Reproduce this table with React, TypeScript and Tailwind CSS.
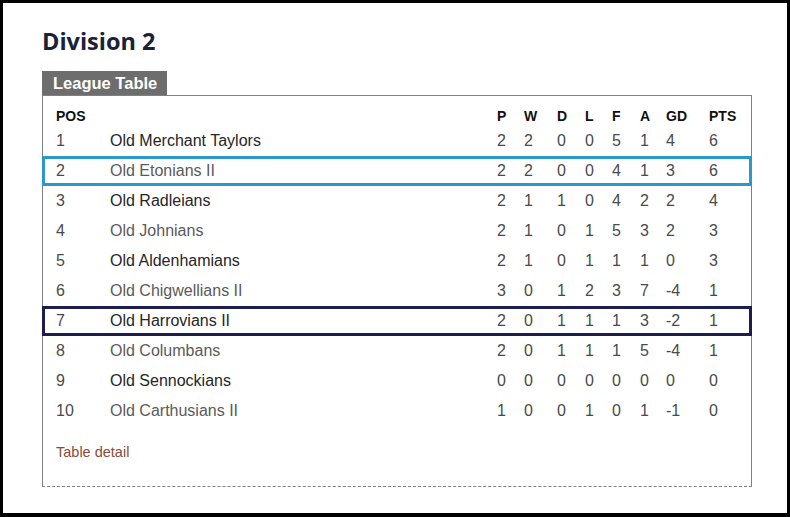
import React from 'react';

type Row = {
  pos: number;
  team: string;
  p: number;
  w: number;
  d: number;
  l: number;
  f: number;
  a: number;
  gd: number;
  pts: number;
  mark?: 'own' | 'watch';
};

const rows: Row[] = [
  { pos: 1, team: 'Old Merchant Taylors', p: 2, w: 2, d: 0, l: 0, f: 5, a: 1, gd: 4, pts: 6 },
  { pos: 2, team: 'Old Etonians II', p: 2, w: 2, d: 0, l: 0, f: 4, a: 1, gd: 3, pts: 6, mark: 'own' },
  { pos: 3, team: 'Old Radleians', p: 2, w: 1, d: 1, l: 0, f: 4, a: 2, gd: 2, pts: 4 },
  { pos: 4, team: 'Old Johnians', p: 2, w: 1, d: 0, l: 1, f: 5, a: 3, gd: 2, pts: 3 },
  { pos: 5, team: 'Old Aldenhamians', p: 2, w: 1, d: 0, l: 1, f: 1, a: 1, gd: 0, pts: 3 },
  { pos: 6, team: 'Old Chigwellians II', p: 3, w: 0, d: 1, l: 2, f: 3, a: 7, gd: -4, pts: 1 },
  { pos: 7, team: 'Old Harrovians II', p: 2, w: 0, d: 1, l: 1, f: 1, a: 3, gd: -2, pts: 1, mark: 'watch' },
  { pos: 8, team: 'Old Columbans', p: 2, w: 0, d: 1, l: 1, f: 1, a: 5, gd: -4, pts: 1 },
  { pos: 9, team: 'Old Sennockians', p: 0, w: 0, d: 0, l: 0, f: 0, a: 0, gd: 0, pts: 0 },
  { pos: 10, team: 'Old Carthusians II', p: 1, w: 0, d: 0, l: 1, f: 0, a: 1, gd: -1, pts: 0 },
];

const cols = 'grid grid-cols-[54px_387px_27px_33px_28px_27px_28px_26px_43px_1fr] items-center';

export default function App() {
  return (
    <div className="box-border h-[517px] w-full border-[3px] border-b-4 border-black bg-white pl-[39px] pr-[35px] pt-[22px] font-['Liberation_Sans',Arial,sans-serif]">
      <h1 className="font-['Open_Sans',sans-serif] text-[23.5px] font-bold leading-[32px] text-[#1a2238]">
        Division 2
      </h1>

      <div className="mt-[14px] flex">
        <div className="h-[24px] bg-[#6d6d6d] pl-[11px] pr-[10px] text-[16.5px] font-bold leading-[24px] text-white">
          League Table
        </div>
      </div>

      <div className="h-[392px] border border-[#808080] [border-bottom-style:dashed] pt-[10px]">
        <div className={`${cols} -mx-px h-[20px] border-x-[3px] border-transparent pl-[11px] text-[14px] font-bold text-[#111]`}>
          <span>POS</span>
          <span></span>
          <span>P</span>
          <span>W</span>
          <span>D</span>
          <span>L</span>
          <span>F</span>
          <span>A</span>
          <span>GD</span>
          <span>PTS</span>
        </div>

        {rows.map((r) => {
          const border =
            r.mark === 'own'
              ? 'border-[#2a98c8]'
              : r.mark === 'watch'
              ? 'border-[#1c1f4d]'
              : 'border-transparent';
          const nameColor = r.pos % 2 === 1 ? 'text-[#262626]' : 'text-[#5a5a5a]';
          return (
            <div
              key={r.pos}
              className={`${cols} -mx-px box-border h-[30px] border-[3px] ${border} pl-[11px] text-[16px] text-[#4a4a4a]`}
            >
              <span>{r.pos}</span>
              <span className={nameColor}>{r.team}</span>
              <span>{r.p}</span>
              <span>{r.w}</span>
              <span>{r.d}</span>
              <span>{r.l}</span>
              <span>{r.f}</span>
              <span>{r.a}</span>
              <span>{r.gd}</span>
              <span>{r.pts}</span>
            </div>
          );
        })}

        <div className="mt-[16px] pl-[13px] text-[14.5px] text-[#8a4a3a]">Table detail</div>
      </div>
    </div>
  );
}
